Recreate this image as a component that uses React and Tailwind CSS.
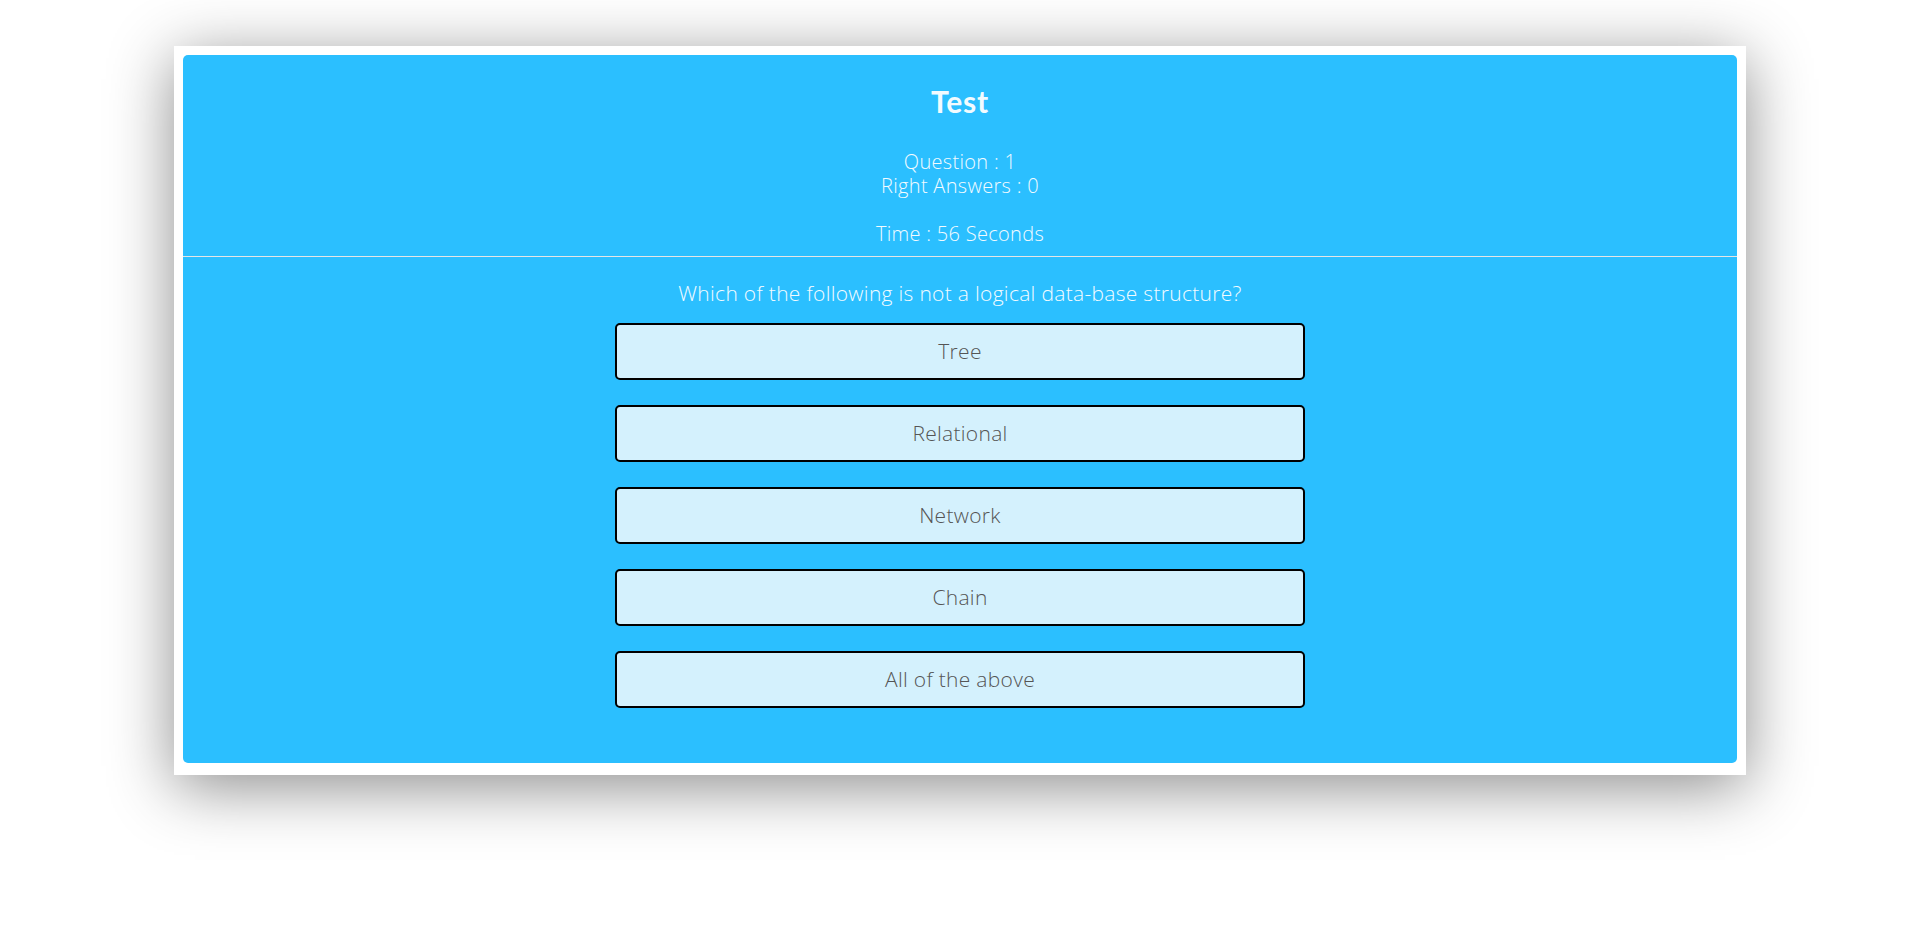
const answers = ["Tree", "Relational", "Network", "Chain", "All of the above"];

export default function App() {
  return (
    <div className="min-h-[943px] bg-white pt-[46px]" style={{ fontFamily: "'Open Sans', Lato, sans-serif" }}>
      <div className="mx-auto w-[1572px] bg-white pt-[9px] px-[9px] pb-[12px] shadow-[0_12px_60px_rgba(0,0,0,0.45)]">
        <div className="rounded-[5px] bg-[#2bbfff] pb-[55px]">
          <div className="flex flex-col items-center pt-[24px] pb-[10px] text-[#f2fbff]">
            <h1 className="text-[30px] font-bold leading-[44px] tracking-wide" style={{ fontFamily: "Lato, sans-serif" }}>Test</h1>
            <p className="mt-[27px] text-[20px] font-light leading-[24px] tracking-[0.3px]">Question : 1</p>
            <p className="text-[20px] font-light leading-[24px] tracking-[0.3px]">Right Answers : 0</p>
            <p className="mt-[24px] text-[20px] font-light leading-[24px] tracking-[0.3px]">Time : 56 Seconds</p>
          </div>
          <div className="h-px bg-[#e6e6e6]"></div>
          <p className="mt-[24px] text-center text-[21px] font-light leading-[24px] tracking-[0.3px] text-[#f2fbff]">
            Which of the following is not a logical data-base structure?
          </p>
          <div className="mt-[18px] flex flex-col items-center gap-[25px]">
            {answers.map((a) => (
              <button
                key={a}
                className="h-[57px] w-[690px] rounded-[5px] border-2 border-black bg-[#d4f1fd] text-[21px] font-light tracking-[0.3px] text-[#555]"
              >
                {a}
              </button>
            ))}
          </div>
        </div>
      </div>
    </div>
  );
}
